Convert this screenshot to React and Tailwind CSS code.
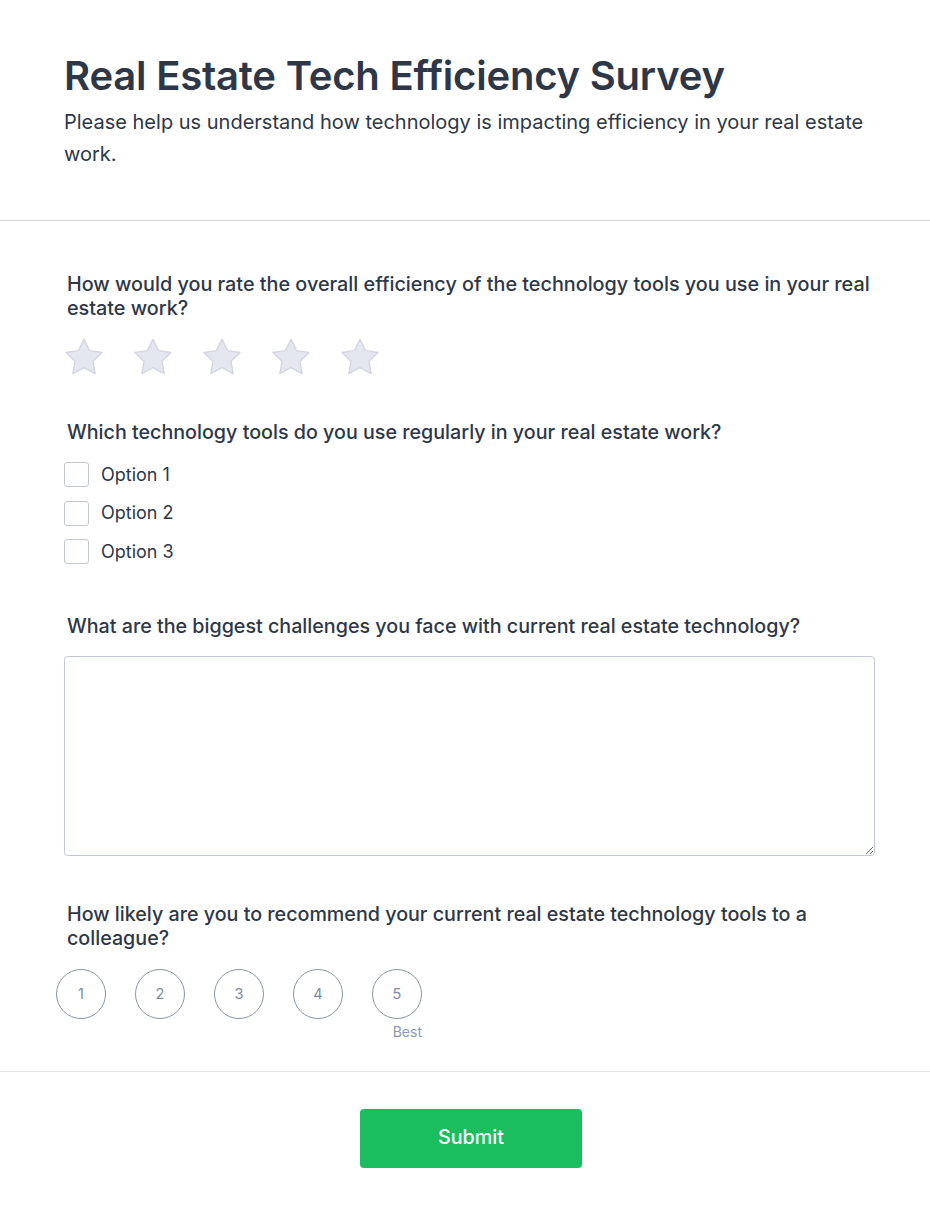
const font = { fontFamily: 'Inter, "Noto Sans", sans-serif' };

function Star() {
  return (
    <svg width="38" height="37" viewBox="2.6 2.3 18.8 18">
      <path
        d="M12 2.8l2.75 5.6 6.15.9-4.45 4.35 1.05 6.1L12 16.85l-5.5 2.9 1.05-6.1L3.1 9.3l6.15-.9z"
        fill="#e5e7f0"
        stroke="#d3d6e0"
        strokeWidth="0.7"
        strokeLinejoin="round"
      />
    </svg>
  );
}

export default function App() {
  return (
    <div className="min-h-screen bg-white text-[#2d3748]" style={font}>
      <header className="px-16 pt-[50px] pb-[50px] border-b border-[#d6d8e1]">
        <h1 className="text-[40px] leading-[52px] font-semibold tracking-[-0.2px]">
          Real Estate Tech Efficiency Survey
        </h1>
        <p className="mt-[4px] text-[20px] leading-[32px] max-w-[802px]">
          Please help us understand how technology is impacting efficiency in your real estate work.
        </p>
      </header>

      <main className="pl-16 pr-[55px] pt-[51px] pb-[27px] border-b border-[#e5e7eb]">
        <section>
          <h2 className="pl-[3px] text-[19.8px] leading-[24px] font-medium">
            How would you rate the overall efficiency of the technology tools you use in your real estate work?
          </h2>
          <div className="mt-[18px] pl-[1px] flex gap-[31px]">
            {[1, 2, 3, 4, 5].map((n) => (
              <Star key={n} />
            ))}
          </div>
        </section>

        <section className="mt-[45px]">
          <h2 className="pl-[3px] text-[19.7px] leading-[24px] font-medium">
            Which technology tools do you use regularly in your real estate work?
          </h2>
          <div className="mt-[18px] flex flex-col gap-[13px]">
            {['Option 1', 'Option 2', 'Option 3'].map((o) => (
              <label key={o} className="flex items-center gap-3 h-[25.5px]">
                <span className="w-[25px] h-[25px] rounded-[3px] border border-[#c3c7cf] bg-white" />
                <span className="text-[18px] leading-[24px]">{o}</span>
              </label>
            ))}
          </div>
        </section>

        <section className="mt-[49px]">
          <h2 className="pl-[3px] text-[19.7px] leading-[24px] font-medium">
            What are the biggest challenges you face with current real estate technology?
          </h2>
          <textarea className="mt-[18px] block w-full h-[200px] rounded-[4px] border border-[#c5c8d6] outline-none p-3 text-[16px]" />
        </section>

        <section className="mt-[46px]">
          <h2 className="pl-[3px] pr-[40px] text-[19.7px] leading-[24px] font-medium">
            How likely are you to recommend your current real estate technology tools to a colleague?
          </h2>
          <div className="mt-[19px] -ml-[8px] flex gap-[29px]">
            {[1, 2, 3, 4, 5].map((n) => (
              <div key={n} className="flex flex-col items-end">
                <div className="w-[50px] h-[50px] rounded-full border border-[#8a94a8] flex items-center justify-center text-[14.5px] text-[#7b8ba6]">
                  {n}
                </div>
                <span className="h-[24px] mt-[1px] text-[14px] leading-[24px] text-[#8a9bb0]">
                  {n === 5 ? 'Best' : ''}
                </span>
              </div>
            ))}
          </div>
        </section>
      </main>

      <footer className="flex justify-center pl-3 pt-[37px] pb-[50px]">
        <button
          type="button"
          className="w-[222px] h-[59px] rounded-[4px] bg-[#1abe5f] text-white text-[19.7px] font-medium"
        >
          Submit
        </button>
      </footer>
    </div>
  );
}
